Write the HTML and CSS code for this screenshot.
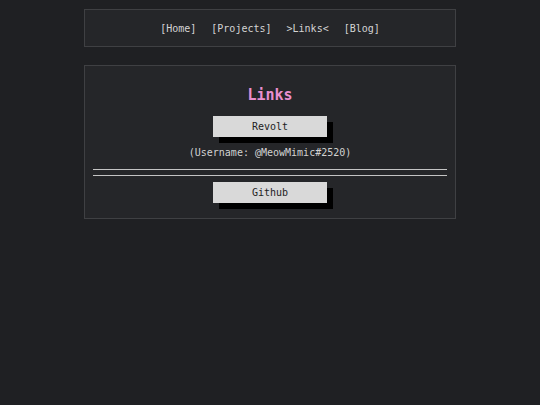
FILE: index.html
```
<!DOCTYPE html>
<html lang="en">
<head>
    <meta charset="UTF-8">
    <meta name="viewport" content="width=device-width, initial-scale=1.0">
    <title>Links</title>
    <link rel="stylesheet" href="styles.css">
</head>
<body>
    <nav class="nav box">
        <a href="#">[Home]</a>
        <a href="#">[Projects]</a>
        <a href="#" class="current">&gt;Links&lt;</a>
        <a href="#">[Blog]</a>
    </nav>

    <main class="links box">
        <h2 class="title">Links</h2>
        <a href="#" class="link-btn">Revolt</a>
        <p class="note">(Username: @MeowMimic#2520)</p>
        <div class="divider"></div>
        <a href="#" class="link-btn">Github</a>
    </main>
</body>
</html>
```

FILE: styles.css
```
* {
    margin: 0;
    padding: 0;
    box-sizing: border-box;
}

body {
    background: #1f2023;
    color: #cfcfcf;
    font-family: "DejaVu Sans Mono", "Liberation Mono", monospace;
    font-size: 10px;
    padding-top: 9px;
}

a {
    color: inherit;
    text-decoration: none;
}

.box {
    width: 372px;
    margin: 0 auto;
    background: #252629;
    border: 1px solid #3f4043;
}

.nav {
    height: 38px;
    display: flex;
    justify-content: center;
    align-items: center;
    gap: 15px;
    margin-bottom: 18px;
}

    .nav a {
        color: #d4d4d4;
    }

.links {
    display: flex;
    flex-direction: column;
    align-items: center;
    padding: 18px 8px 15px;
}

.title {
    color: #ea8fcf;
    font-size: 15px;
    font-weight: bold;
    line-height: 22px;
    margin-bottom: 10px;
}

.link-btn {
    display: block;
    width: 114px;
    height: 21px;
    line-height: 21px;
    text-align: center;
    background: #d9d9d9;
    color: #222;
    box-shadow: 6px 6px 0 #000;
}

.note {
    line-height: 14px;
    margin-top: 9px;
    color: #d2d2d2;
}

.divider {
    align-self: stretch;
    height: 7px;
    border-top: 1px solid #c4c4c4;
    border-bottom: 1px solid #c4c4c4;
    margin: 9px 0 6px;
}
```
